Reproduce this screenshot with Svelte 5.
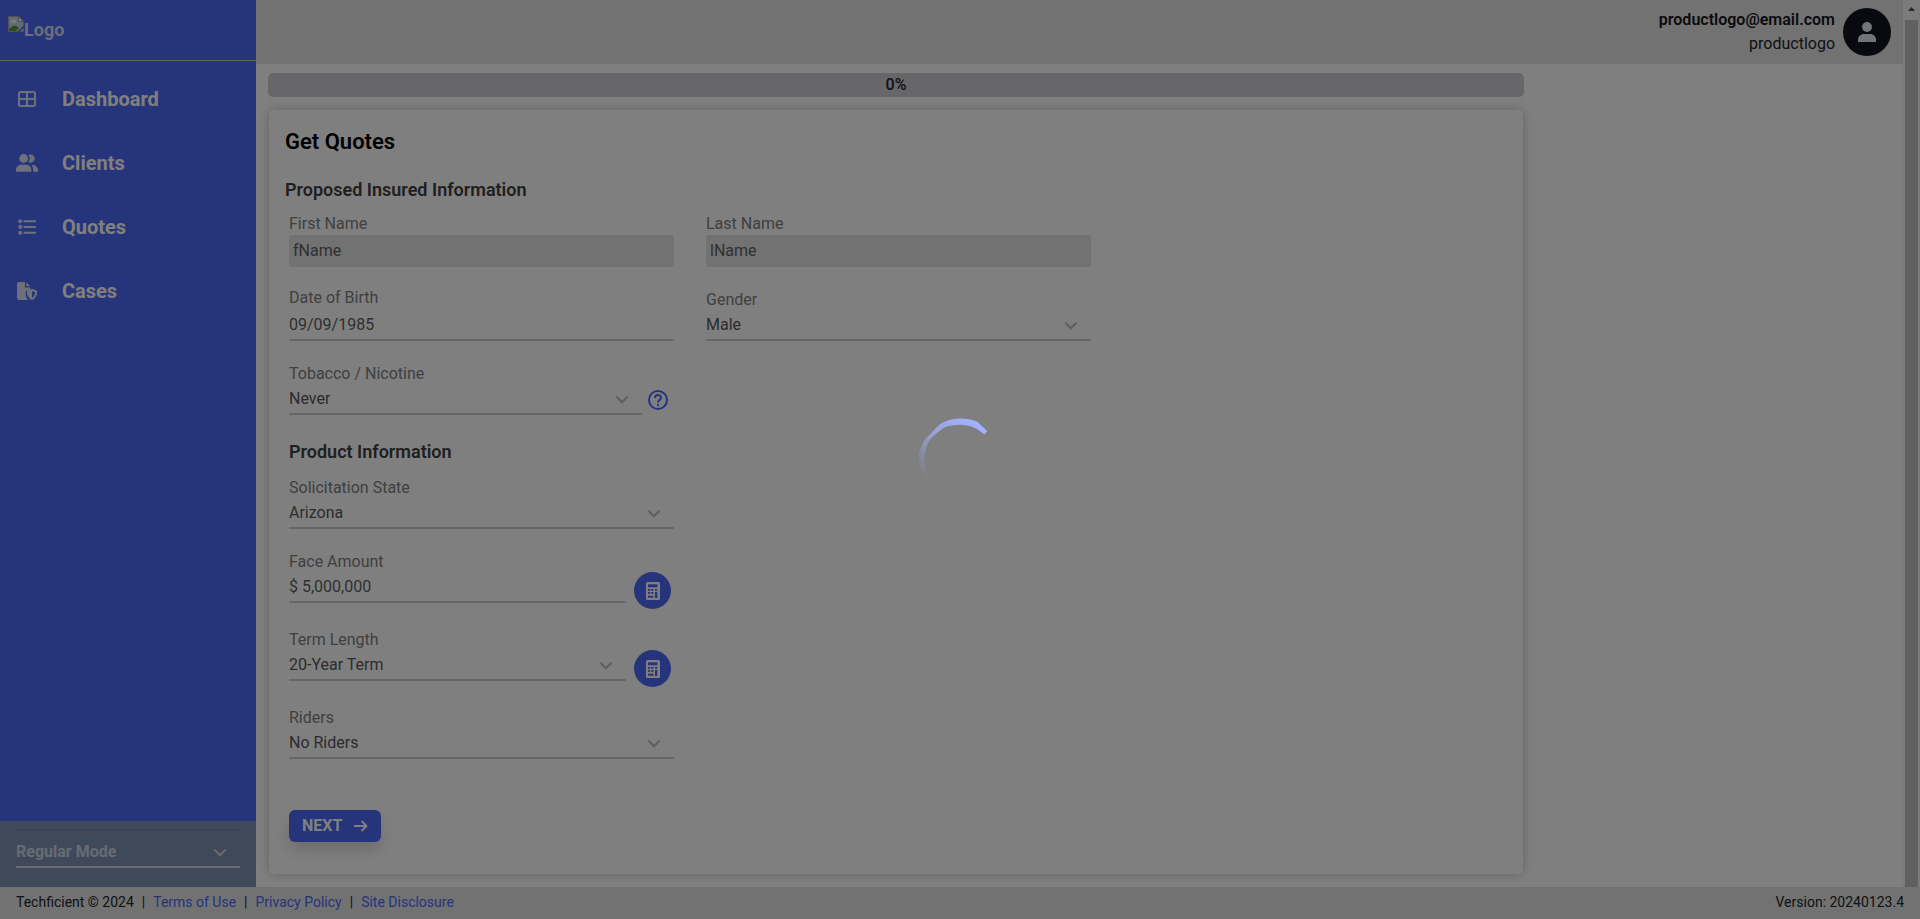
<script>
  const nav = [
    { label: 'Dashboard', icon: 'grid' },
    { label: 'Clients', icon: 'people' },
    { label: 'Quotes', icon: 'list' },
    { label: 'Cases', icon: 'file' }
  ];
  const links = ['Terms of Use', 'Privacy Policy', 'Site Disclosure'];
</script>

{#snippet chevron()}
  <svg class="chevron" width="14" height="10" viewBox="0 0 14 10" aria-hidden="true"><path d="M2 2.200l5 5 5-5" fill="none" stroke="currentColor" stroke-width="2.300" stroke-linecap="round" /></svg>
{/snippet}

{#snippet selectField(id, label, value)}
  <div class="field">
    <label for={id}>{label}</label>
    <div class="select">
      <select {id}><option>{value}</option></select>
      {@render chevron()}
    </div>
  </div>
{/snippet}

{#snippet calculator(label)}
  <button class="calc" type="button" aria-label={label}>
    <svg width="14" height="18" viewBox="0 0 14 18">
      <rect width="14" height="18" rx="1.500" fill="#fff" />
      <g fill="#4a67f8">
        <rect x="2" y="2.300" width="9.500" height="3" />
        <rect x="2" y="7" width="2.200" height="1.800" /><rect x="5.200" y="7" width="2.300" height="1.800" /><rect x="9" y="7" width="2.300" height="1.800" />
        <rect x="2" y="10" width="2.200" height="1.800" /><rect x="5.200" y="10" width="2.300" height="1.800" /><rect x="9" y="10" width="2.300" height="6" />
        <rect x="2" y="13.700" width="5.500" height="2" />
      </g>
    </svg>
  </button>
{/snippet}

<div class="app">
  <aside class="sidebar">
    <div class="brand">
      <svg width="16" height="16" viewBox="0 0 16 16" aria-hidden="true">
        <path d="M.5.5h10.2l4.8 4.8v4.2L9.5 15.5H.5z" fill="#c3d4f0" stroke="#a5a5a5" />
        <path d="M10.5.5v5h5z" fill="#fff" stroke="#a5a5a5" />
        <path d="M2.5 6.2c0-1.6 1.6-1.8 2-1.5.5-1.6 3-1.5 3 .3 1.300 0 1.300 1.500.5 1.500H3z" fill="#fff" />
        <path d="M1 15v-2.200c2-1.500 3.500-3.300 6-3 2 .3 2.500 1.200 3.800 2.200L8 15z" fill="#4f9e2f" />
        <path d="M9.500 16 16 9.500V12l-4 4z" fill="#4c68f8" />
        <path d="M12 15.500h3.500V12z" fill="#c3d4f0" stroke="#a5a5a5" />
      </svg>
      <span>Logo</span>
    </div>
    <nav>
      {#each nav as item}
        <a href="#{item.icon}">
          <svg width="22" height="22" viewBox="0 0 22 22" aria-hidden="true">
            {#if item.icon === 'grid'}
              <path fill="currentColor" fill-rule="evenodd" d="M4.500 3h13A2.500 2.500 0 0 1 20 5.500v11a2.500 2.500 0 0 1-2.500 2.500h-13A2.500 2.500 0 0 1 2 16.500v-11A2.500 2.500 0 0 1 4.500 3zM4 5.500V10h6V5H4.500zM12 5v5h6V5zM4 12v5h6v-5zM12 12v5h6v-5z" />
            {:else if item.icon === 'people'}
              <g fill="currentColor">
                <circle cx="7.700" cy="6.500" r="4.400" />
                <path d="M0 19.800v-1.500c0-3.500 2.500-5.500 5.500-5.500h4.300c3 0 5.500 2 5.500 5.500v1.500z" />
                <path d="M12.300 10.300c2-2.200 2-5.300.2-7.300 3.200-1.300 6.200.8 6.200 3.600 0 3-3.300 5-6.400 3.700z" />
                <path d="M15.500 12.900c4 0 6.500 2 6.500 5.500v1.400h-4.800v-1.500c0-2.200-.6-4-1.700-5.400z" />
              </g>
            {:else if item.icon === 'list'}
              <path d="M8.500 5.300H19M8.500 11H19M8.500 16.700H19" fill="none" stroke="currentColor" stroke-width="2" stroke-linecap="square" />
              <g fill="currentColor"><circle cx="4.200" cy="5.300" r="2" /><circle cx="4.200" cy="11" r="2" /><circle cx="4.200" cy="16.700" r="2" /></g>
            {:else}
              <g fill="currentColor">
                <path d="M3 2h6v5.500h5.200v1.700L9.700 11v3c0 2.500 1 4.500 2.300 6H3a2 2 0 0 1-2-2V4a2 2 0 0 1 2-2z" />
                <path d="M10.300 2.200 14 6.200h-3.700z" />
                <path fill-rule="evenodd" d="M16 8.700l5.100 2.100c.3 4.500-1.600 7.700-5.100 9.300-3.500-1.600-5.400-4.800-5.100-9.300zM16 10.900v6.900c2-1.200 3-3 3.100-5.600z" />
              </g>
            {/if}
          </svg>
          <span>{item.label}</span>
        </a>
      {/each}
    </nav>
    <div class="mode">
      <div class="select">
        <select aria-label="Mode"><option>Regular Mode</option></select>
        {@render chevron()}
      </div>
    </div>
  </aside>

  <div class="page">
    <header>
      <div class="user">
        <strong>productlogo@email.com</strong>
        <span>productlogo</span>
      </div>
      <button class="avatar" type="button" aria-label="Account">
        <svg width="18" height="22" viewBox="0 0 18 22"><circle cx="9" cy="6" r="5" fill="#e2e9f0" /><path d="M0 21v-2c0-4 3-6 6-6h6c3 0 6 2 6 6v2z" fill="#e2e9f0" /></svg>
      </button>
    </header>

    <main>
      <div class="progress" role="progressbar" aria-label="Progress" aria-valuenow="0">0%</div>
      <form class="card">
        <h1>Get Quotes</h1>
        <h2>Proposed Insured Information</h2>
        <div class="insured">
          <div class="field">
            <label for="first">First Name</label>
            <input id="first" class="filled" value="fName" readonly />
          </div>
          <div class="field">
            <label for="last">Last Name</label>
            <input id="last" class="filled" value="lName" readonly />
          </div>
          <div class="field">
            <label for="dob">Date of Birth</label>
            <input id="dob" value="09/09/1985" />
          </div>
          {@render selectField('gender', 'Gender', 'Male')}
          <div class="with-help">
            {@render selectField('tobacco', 'Tobacco / Nicotine', 'Never')}
            <button class="help" type="button" aria-label="Help">
              <svg width="20" height="20" viewBox="0 0 20 20"><circle cx="10" cy="10" r="9" fill="none" stroke="currentColor" stroke-width="2" /><path d="M7 8c0-4 6-4 6-.3 0 2.300-3 2.300-3 4.800" fill="none" stroke="currentColor" stroke-width="2" /><rect x="9" y="14" width="2" height="2" fill="currentColor" /></svg>
            </button>
          </div>
        </div>

        <h2 class="product-title">Product Information</h2>
        <div class="product">
          {@render selectField('state', 'Solicitation State', 'Arizona')}
          <div class="with-calc">
            <div class="field">
              <label for="face">Face Amount</label>
              <input id="face" class="short" value="$ 5,000,000" />
            </div>
            {@render calculator('Calculate face amount')}
          </div>
          <div class="with-calc">
            {@render selectField('term', 'Term Length', '20-Year Term')}
            {@render calculator('Calculate term length')}
          </div>
          {@render selectField('riders', 'Riders', 'No Riders')}
        </div>
        <button class="next" type="button">
          NEXT
          <svg width="14" height="12" viewBox="0 0 14 12" aria-hidden="true"><path d="M0 6h12.500M7.500 1l5 5-5 5" fill="none" stroke="currentColor" stroke-width="2" stroke-linejoin="round" /></svg>
        </button>
      </form>
    </main>
  </div>

  <div class="scrollbar" aria-hidden="true">
    <svg width="7" height="4" viewBox="0 0 7 4"><path d="M0 4 3.500 0 7 4z" fill="#505050" /></svg>
    <div class="thumb"></div>
  </div>

  <footer>
    <span>Techficient © 2024</span>
    {#each links as link}
      <span class="bar">|</span><a href="#{link}">{link}</a>
    {/each}
    <span class="version">Version: 20240123.4</span>
  </footer>
</div>

<div class="overlay" role="status" aria-label="Loading">
  <svg width="120" height="120" viewBox="0 0 120 120">
    <defs>
      <linearGradient id="fade" gradientUnits="userSpaceOnUse" x1="86" y1="30" x2="30" y2="84">
        <stop offset="0" stop-color="#a3b2ff" />
        <stop offset=".45" stop-color="#a3b2ff" stop-opacity=".75" />
        <stop offset="1" stop-color="#a3b2ff" stop-opacity="0" />
      </linearGradient>
    </defs>
    <path d="M87.300 31.300 77.300 21.700Q70 18.500 60 18.500 51 18.700 43.300 22.300 40 24 37.300 26.700L25 39.300Q22 43.500 20 50 18.600 55 19 60 19 66 20.700 71.700 22.500 77 28 84L32 83Q26 75 24.900 66.700 23.700 59 24.900 53.300 25.900 47 28.500 41.700 33.300 35.300 40.200 30.300 43 28 46.700 26.500 53 24.700 60 24.700 66 24.700 71.500 26.500 76 28.200 80 31.200L84.300 34.500z" fill="url(#fade)" />
  </svg>
</div>

<style>
  :global(body) {
    margin: 0;
    background: #fff;
    font-family: Roboto, "Liberation Sans", sans-serif;
    font-size: 16px;
    line-height: 20px;
    color: #212529;
  }
  .app, .app * { box-sizing: border-box; }
  .app {
    display: grid;
    grid-template-columns: 256px minmax(0, 1fr) 17px;
    grid-template-rows: 1fr auto;
    min-height: 100vh;
  }
  button, input, select { font: inherit; color: inherit; margin: 0; padding: 0; border: 0; background: none; }
  a { text-decoration: none; color: #4c68f8; }

  .sidebar { display: flex; flex-direction: column; background: #4c68f8; }
  .brand {
    display: flex;
    align-items: flex-start;
    height: 61px;
    padding: 16px 8px;
    border-bottom: 1px solid #cdc8b8;
    font-size: 18px;
    font-weight: 700;
    line-height: 28px;
    color: #d5ddf0;
  }
  nav { display: flex; flex-direction: column; padding-top: 6px; }
  nav a {
    display: flex;
    align-items: center;
    gap: 24px;
    height: 64px;
    padding: 0 16px;
    font-size: 20px;
    font-weight: 700;
    color: #fff;
  }
  nav svg { color: #dbe2f4; }
  .mode { margin-top: auto; padding: 8px 16px 19px; background: #7c94b4; }
  .mode .select { border-top: 1px solid #71869f; color: #e0e0e0; }
  .mode select { height: 38px; padding-top: 8px; border-color: #d8d8d8; font-weight: 700; color: #cfd6e4; }
  .mode .chevron { margin-top: 8px; color: #d0d0d0; }

  header {
    display: flex;
    justify-content: flex-end;
    align-items: center;
    gap: 8px;
    height: 64px;
    padding-right: 12px;
    background: #e4e4e4;
  }
  .user { display: flex; flex-direction: column; text-align: right; line-height: 24px; }
  .user strong { font-weight: 600; color: #15151f; }
  .avatar { display: grid; place-items: center; width: 48px; height: 48px; border-radius: 50%; background: #12141f; }

  main { max-width: 1280px; padding: 9px 12px 13px; }
  .progress { height: 24px; line-height: 24px; border-radius: 5px; background: #cecfd4; text-align: center; font-weight: 500; }
  .card {
    margin: 13px 1px 0;
    padding: 18px 16px 32px;
    border-radius: 4px;
    background: #fff;
    box-shadow: 0 0 12px rgba(0, 0, 0, .22);
  }
  h1 { margin: 0 0 22px; font-size: 22px; line-height: 28px; font-weight: 600; color: #000; }
  h2 { margin: 0 0 11px; font-size: 18px; line-height: 24px; font-weight: 600; color: #404040; }
  .insured {
    display: grid;
    grid-template-columns: 1fr 1fr;
    gap: 20px 32px;
    max-width: 806px;
    padding-left: 4px;
  }
  .field { display: flex; flex-direction: column; justify-content: flex-end; height: 54px; flex: 1; min-width: 0; }
  .field label { color: #808080; margin: 1px 0; }
  .field:has(.select) label, .field:has(.short) label { margin: 0; }
  .field input { width: 100%; height: 32px; border-bottom: 2px solid #cdcdcd; border-radius: 2px; color: #606060; }
  .field input.filled { padding: 0 4px 2px; border: 0; background: #e4e4e4; }
  .field input.short { height: 31px; }
  .select { display: flex; align-items: center; }
  select {
    appearance: none;
    width: 100%;
    height: 31px;
    border-bottom: 2px solid #cdcdcd;
    border-radius: 0;
    color: #585858;
  }
  .chevron { flex: none; margin-left: -27px; margin-right: 13px; color: #bdbfc4; pointer-events: none; }
  .with-help { display: flex; align-items: flex-end; gap: 6px; padding-right: 6px; }
  .help { width: 20px; height: 20px; margin-bottom: 5px; color: #4c68f8; }
  .help svg { display: block; }
  .product-title { margin: 25px 0 11px 4px; }
  .product { display: flex; flex-direction: column; gap: 20px; max-width: 389px; padding-left: 4px; }
  .product > .field { flex: none; }
  .with-calc { display: flex; align-items: flex-start; gap: 8px; padding-right: 3px; height: 58px; }
  .calc { display: grid; place-items: center; width: 37px; height: 37px; margin-top: 23px; border-radius: 50%; background: #4c68f8; }
  .next {
    display: flex;
    align-items: center;
    gap: 12px;
    height: 32px;
    margin: 51px 0 0 4px;
    padding: 0 13px;
    border-radius: 6px;
    background: #4c68f8;
    box-shadow: 0 8px 16px rgba(0, 0, 0, .15);
    font-weight: 700;
    color: #fff;
  }

  .scrollbar { display: flex; flex-direction: column; align-items: center; padding-top: 7px; background: #f6f6f6; }
  .scrollbar svg { flex: none; margin-bottom: 9px; }
  .thumb { flex: 1; width: 13px; background: #c0c0c0; }

  footer {
    grid-column: 1 / -1;
    display: flex;
    align-items: center;
    height: 32px;
    padding: 0 16px 2px;
    background: #e4e4e4;
    font-size: 14px;
  }
  .bar { margin: 0 8px; }
  .version { margin-left: auto; }

  .overlay {
    position: fixed;
    inset: 0;
    display: grid;
    place-items: center;
    background: rgba(0, 0, 0, .5);
  }
</style>
